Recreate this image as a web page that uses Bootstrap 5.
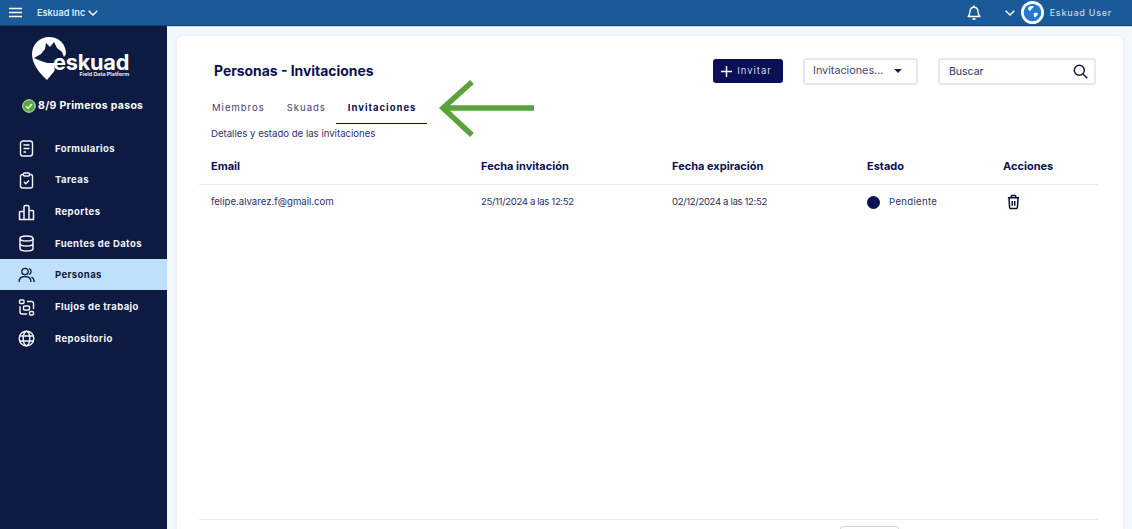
<!DOCTYPE html>
<html lang="es">
  <head>
    <meta charset="UTF-8" />
    <meta name="viewport" content="width=device-width, initial-scale=1.0" />
    <title>Eskuad - Invitaciones</title>
    <link href="https://cdn.jsdelivr.net/npm/bootstrap@5.3.1/dist/css/bootstrap.min.css" rel="stylesheet" />
    <script src="https://cdn.jsdelivr.net/npm/bootstrap@5.3.1/dist/js/bootstrap.bundle.min.js"></script>
    <style>
      html, body { height: 529px; overflow: hidden; }
      body { font-family: Inter, "Open Sans", sans-serif; background: #f3f8fd; color: #0b1150; font-size: 10px; }
      .top-bar { height: 25px; background: #1b5a98; color: #e3edf7; padding: 0 20px 0 9px; box-shadow: 0 1px 1px #123f70; position: relative; z-index: 2; }
      .top-bar svg { display: block; }
      .org-name { margin-left: 15px; margin-right: 3px; font-size: 9.2px; font-weight: 600; color: #dce8f4; }
      .user-name { margin-left: 6px; font-size: 9px; font-weight: 500; letter-spacing: .75px; color: #c6d8ea; }
      .side-bar { width: 167px; height: 504px; background: #0d1a42; color: #fff; flex-shrink: 0; }
      .logo-box { height: 44px; margin-top: 12px; padding-left: 32px; }
      .logo-text { margin-left: -15px; margin-top: 16px; position: relative; }
      .logo-word { font-size: 21.7px; font-weight: 700; line-height: 18px; letter-spacing: -.2px; }
      .logo-sub { font-size: 5.4px; font-weight: 700; line-height: 6px; text-align: right; color: #e8e8f0; }
      .steps-line { margin-top: 15px; height: 20px; padding-left: 22px; font-size: 10.5px; font-weight: 700; letter-spacing: .3px; gap: 2px; }
      .menu-list { margin-top: 16px; }
      .menu-row { height: 31.7px; padding: 2px 0 0 18px; font-size: 9.5px; font-weight: 700; letter-spacing: .42px; color: #f2f4fa; text-decoration: none; }
      .menu-row svg { width: 17px; height: 17px; margin-right: 20px; flex-shrink: 0; }
      .menu-on { background: #bfe0fb; color: #0d1a42; }
      .page-area { min-width: 0; padding: 11px 9px 0 10px; }
      .white-panel { height: 493px; overflow: hidden; background: #fff; border-radius: 6px 6px 0 0; box-shadow: 0 0 3px #dfe7f2; padding: 20px 25px 0 22px; position: relative; }
      .head-row { height: 30px; }
      .page-title { font-size: 13.9px; font-weight: 700; margin: 0 0 0 15px; color: #0b1150; }
      .btn-invite { width: 70px; height: 24px; background: #0a0f56; color: #cfd3ea; border: 0; border-radius: 3px; font-size: 9.5px; letter-spacing: 1px; padding: 0 3px 0 0; margin-right: 20px; gap: 5px; }
      .pick-box { width: 115px; height: 27px; border: 2px solid #e6e8f0; border-radius: 3px; padding: 0 14px 0 8px; font-size: 10.8px; color: #45476f; margin-right: 20px; }
      .pick-caret { border-left: 4px solid transparent; border-right: 4px solid transparent; border-top: 4px solid #1a1d4f; }
      .find-box { width: 158px; height: 27px; border: 2px solid #e6e8f0; border-radius: 3px; padding: 1px 6px 0 9px; font-size: 10.5px; color: #2e3060; margin-right: 2px; }
      .tab-row { margin-top: 10px; height: 28px; padding-left: 2px; }
      .tab-item { font-size: 9.5px; letter-spacing: 1px; color: #3f4270; padding: 0 11px; height: 28px; line-height: 23px; text-decoration: none; }
      .tab-item.tab-on { color: #0b1150; font-weight: 700; border-bottom: 1.5px solid #0a0f56; padding: 0 11px 0 12px; margin-left: -1px; }
      .tab-note { font-size: 9.6px; color: #2e3168; margin: 3px 0 0 12px; line-height: 14px; }
      .data-table { table-layout: fixed; width: 899px; margin: 13px 0 0; color: #0b1150; }
      .data-table th { font-size: 11px; font-weight: 700; padding: 5px 12px 11px; line-height: 14px; border-bottom: 1px solid #e8e8ee; color: #0b1150; }
      .data-table td { font-size: 9.6px; padding: 9px 12px; line-height: 16px; border: 0; color: #2e3168; vertical-align: middle; }
      .data-table td.date-cell { letter-spacing: -.36px; }
      .state-dot { width: 13px; height: 13px; border-radius: 50%; background: #0a0f56; margin-right: 9px; }
      .state-text { letter-spacing: .3px; }
      .trash-icon { margin-left: 3px; display: block; }
      .foot-line { position: absolute; left: 22px; width: 899px; top: 483px; border-top: 1px solid #e8eaf0; }
      .page-size { position: absolute; left: 663px; top: 490px; width: 59px; height: 26px; border: 1px solid #cfd2da; border-radius: 3px; }
      .big-arrow { position: absolute; left: 260px; top: 44px; }
    </style>
  </head>
  <body>
    <div class="top-bar d-flex align-items-center">
      <svg width="13" height="11" viewBox="0 0 13 11" fill="none" stroke="#fff" stroke-width="1.5"><path d="M0 1.5h13M0 5.5h13M0 9.5h13"/></svg>
      <span class="org-name">Eskuad Inc</span>
      <svg width="10" height="6" viewBox="0 0 10 6" fill="none" stroke="#fff" stroke-width="1.4"><path d="M.7.7 5 5 9.3.7"/></svg>
      <div class="ms-auto d-flex align-items-center">
        <svg width="14" height="15" viewBox="0 0 14 15" fill="none" stroke="#fff" stroke-width="1.4" stroke-linejoin="round"><path d="M1.2 11.5c1.2-1.2 1.6-2.6 1.8-5C3.2 3.800 4.800 2.200 7 2.200s3.800 1.600 4 4.300c.2 2.400.6 3.800 1.800 5z"/><path d="M5.500 13.500c.8.700 2.200.700 3 0M7 .5v1.700"/></svg>
        <svg class="ms-4" width="10" height="6" viewBox="0 0 10 6" fill="none" stroke="#fff" stroke-width="1.4" style="margin-right:6px"><path d="M.7.7 5 5 9.3.7"/></svg>
        <svg width="23" height="23" viewBox="0 0 23 23"><circle cx="11.500" cy="11.500" r="11.500" fill="#fff"/><circle cx="11.500" cy="11.500" r="8.800" fill="#2677cf"/><path d="M7.500 6.500C9 5.200 11 4.800 12.500 5.300c.3 1.200-1 1.700-1.800 2.400s-.6 2.300-1.800 2.100S6.500 7.800 7.500 6.500zM13 12c1.500-.5 3.300-.3 4 .4-.5 2-1.700 3.400-3.400 4.100-.9-1.200-1.500-3.400-.6-4.500z" fill="#fff"/></svg>
        <span class="user-name">Eskuad User</span>
      </div>
    </div>
    <div class="d-flex">
      <aside class="side-bar">
        <div class="logo-box d-flex">
          <svg width="36" height="43" viewBox="0 0 36 43" class="flex-shrink-0">
            <path fill="#fff" d="M17 0C27 0 34 7 34 17L24 32 15 43C8 37 0 27 0 17 0 7 8 0 17 0z"/>
            <path fill="#0d1a42" d="M2 21 9 17 13 12 14 6 18 10 22 5 25 11 30 15 32 20 36 22V36H23L22 26 15 26 9 24z"/>
          </svg>
          <div class="logo-text">
            <div class="logo-word">eskuad</div>
            <div class="logo-sub">Field Data Platform</div>
          </div>
        </div>
        <div class="steps-line d-flex align-items-center">
          <svg width="14" height="14" viewBox="0 0 14 14"><circle cx="7" cy="7" r="6.300" fill="#5aa63f" stroke="#cfe8c4" stroke-width="1"/><path d="M4 7.300 6.100 9.300 10 5" fill="none" stroke="#fff" stroke-width="1.400"/></svg>
          <span>8/9 Primeros pasos</span>
        </div>
        <nav class="menu-list">
          <a class="menu-row d-flex align-items-center" href="#"><svg viewBox="0 0 17 17" fill="none" stroke="currentColor" stroke-width="1.400"><rect x="2.500" y="1" width="12" height="15" rx="2.500"/><path d="M5.500 5h6M5.500 8.500h6M5.500 12h2.500"/></svg>Formularios</a>
          <a class="menu-row d-flex align-items-center" href="#"><svg viewBox="0 0 17 17" fill="none" stroke="currentColor" stroke-width="1.400"><path d="M5.500 2.500H4.500a2 2 0 0 0-2 2V14a2 2 0 0 0 2 2h8a2 2 0 0 0 2-2V4.500a2 2 0 0 0-2-2h-1"/><rect x="5.500" y="1" width="6" height="3" rx="1"/><path d="m6 10 1.800 1.800L11 8.500"/></svg>Tareas</a>
          <a class="menu-row d-flex align-items-center" href="#"><svg viewBox="0 0 17 17" fill="none" stroke="currentColor" stroke-width="1.500"><path d="M1.500 15.500V8.500a1 1 0 0 1 1-1H6v8zM6 15.500V3a1.500 1.500 0 0 1 1.500-1.500h2A1.500 1.500 0 0 1 11 3v12.500zM11 15.500V6.500h3.500a1 1 0 0 1 1 1v8zM1.500 15.500h14"/></svg>Reportes</a>
          <a class="menu-row d-flex align-items-center" href="#"><svg viewBox="0 0 17 17" fill="none" stroke="currentColor" stroke-width="1.500"><ellipse cx="8.500" cy="3.500" rx="6.500" ry="2.500"/><path d="M2 3.500v10c0 1.400 2.900 2.500 6.500 2.500s6.500-1.100 6.500-2.500v-10M2 8.500c0 1.400 2.900 2.500 6.500 2.500S15 9.900 15 8.500"/></svg>Fuentes de Datos</a>
          <a class="menu-row menu-on d-flex align-items-center" href="#"><svg viewBox="0 0 17 17" fill="none" stroke="currentColor" stroke-width="1.300"><circle cx="7" cy="4.500" r="3.200"/><path d="M1 15c0-3.500 2.500-5.500 6-5.500s6 2 6 5.500M11 1.500a3.200 3.200 0 0 1 0 6M13.500 10c1.600.9 2.700 2.600 2.700 5"/></svg>Personas</a>
          <a class="menu-row d-flex align-items-center" href="#"><svg viewBox="0 0 17 17" fill="none" stroke="currentColor" stroke-width="1.400"><rect x="1.500" y="1" width="4.500" height="3.500" rx="1"/><rect x="5.500" y="7" width="6" height="4" rx="1"/><rect x="11.500" y="12.500" width="4" height="3.500" rx="1"/><path d="M9 2.500h4.500a2 2 0 0 1 2 2V10M2 7v6a2 2 0 0 0 2 2h5"/></svg>Flujos de trabajo</a>
          <a class="menu-row d-flex align-items-center" href="#"><svg viewBox="0 0 17 17" fill="none" stroke="currentColor" stroke-width="1.400"><circle cx="8.500" cy="8.500" r="7.300"/><ellipse cx="8.500" cy="8.500" rx="3.300" ry="7.300"/><path d="M1.500 6h14M1.500 11h14"/></svg>Repositorio</a>
        </nav>
      </aside>
      <main class="page-area flex-grow-1">
        <div class="white-panel">
          <div class="head-row d-flex align-items-center">
            <h1 class="page-title me-auto">Personas - Invitaciones</h1>
            <button class="btn-invite d-flex align-items-center justify-content-center" type="button">
              <svg width="11" height="11" viewBox="0 0 11 11" stroke="#fff" stroke-width="1.500"><path d="M5.500 0v11M0 5.500h11"/></svg>Invitar
            </button>
            <div class="pick-box d-flex align-items-center justify-content-between"><span>Invitaciones...</span><span class="pick-caret"></span></div>
            <div class="find-box d-flex align-items-center justify-content-between">
              <span>Buscar</span>
              <svg width="15" height="15" viewBox="0 0 15 15" fill="none" stroke="#13163f" stroke-width="1.500"><circle cx="6.300" cy="6.300" r="5"/><path d="m10 10 4.300 4.300"/></svg>
            </div>
          </div>
          <div class="tab-row d-flex position-relative">
            <a class="tab-item" href="#">Miembros</a>
            <a class="tab-item" href="#">Skuads</a>
            <a class="tab-item tab-on" href="#">Invitaciones</a>
          </div>
          <p class="tab-note">Detalles y estado de las invitaciones</p>
          <table class="table data-table">
            <colgroup><col style="width:270px" /><col style="width:191px" /><col style="width:195px" /><col style="width:136px" /><col style="width:107px" /></colgroup>
            <thead>
              <tr><th>Email</th><th>Fecha invitación</th><th>Fecha expiración</th><th>Estado</th><th>Acciones</th></tr>
            </thead>
            <tbody>
              <tr>
                <td>felipe.alvarez.f@gmail.com</td>
                <td class="date-cell">25/11/2024 a las 12:52</td>
                <td class="date-cell">02/12/2024 a las 12:52</td>
                <td><div class="d-flex align-items-center"><span class="state-dot"></span><span class="state-text">Pendiente</span></div></td>
                <td>
                  <svg class="trash-icon" width="15" height="16" viewBox="0 0 16 17" fill="none" stroke="#0b0f3a" stroke-width="1.600"><path d="M2 4h12M5.500 4V2.500a1 1 0 0 1 1-1h3a1 1 0 0 1 1 1V4M3.200 4l.6 10a1.500 1.500 0 0 0 1.500 1.500h5.400a1.500 1.500 0 0 0 1.500-1.500l.6-10M6.700 7.500v5M9.300 7.500v5"/></svg>
                </td>
              </tr>
            </tbody>
          </table>
          <svg class="big-arrow" width="100" height="60" viewBox="0 0 100 60" fill="none" stroke="#5ba23c" stroke-width="5.500"><path d="M97 28H8M35 2 6 28l29 27"/></svg>
          <div class="foot-line"></div>
          <div class="page-size"></div>
        </div>
      </main>
    </div>
  </body>
</html>
